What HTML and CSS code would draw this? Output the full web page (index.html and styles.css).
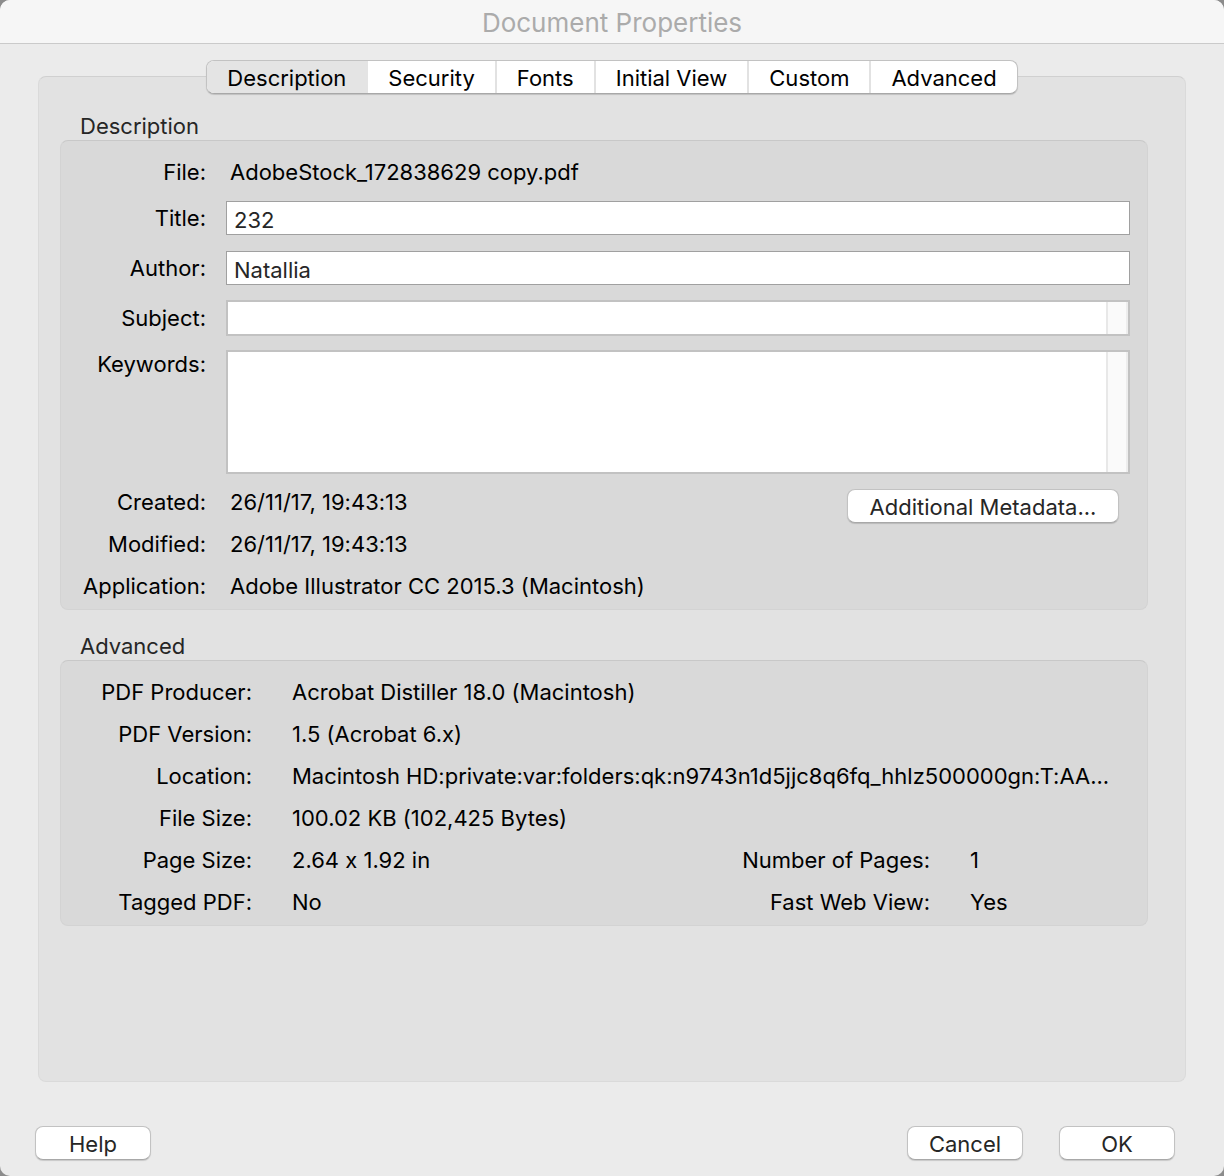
FILE: index.html
```html
<!DOCTYPE html>
<html lang="en">
<head>
  <meta charset="UTF-8">
  <title>Document Properties</title>
  <meta name="viewport" content="width=device-width, initial-scale=1.0">
  <link rel="stylesheet" href="styles.css">
</head>
<body>

  <div class="window">
    <header class="titlebar">
      <h1>Document Properties</h1>
    </header>

    <main class="panel">
      <div class="tabs" role="tablist">
        <button type="button" role="tab" class="tab active" aria-selected="true">Description</button>
        <button type="button" role="tab" class="tab">Security</button>
        <button type="button" role="tab" class="tab">Fonts</button>
        <button type="button" role="tab" class="tab">Initial View</button>
        <button type="button" role="tab" class="tab">Custom</button>
        <button type="button" role="tab" class="tab">Advanced</button>
      </div>

      <h2>Description</h2>
      <form class="group description">
        <span class="name">File:</span>
        <span class="value wide">AdobeStock_172838629 copy.pdf</span>

        <label class="name middle" for="title">Title:</label>
        <input class="wide" type="text" id="title" value="232">

        <label class="name middle" for="author">Author:</label>
        <input class="wide" type="text" id="author" value="Natallia">

        <label class="name middle" for="subject">Subject:</label>
        <div class="scroll-box wide">
          <textarea id="subject" rows="1"></textarea>
          <span class="track"></span>
        </div>

        <label class="name" for="keywords">Keywords:</label>
        <div class="scroll-box tall wide">
          <textarea id="keywords"></textarea>
          <span class="track"></span>
        </div>

        <span class="name">Created:</span>
        <span class="value">26/11/17, 19:43:13</span>
        <button type="button" class="btn metadata">Additional Metadata...</button>

        <span class="name">Modified:</span>
        <span class="value">26/11/17, 19:43:13</span>

        <span class="name">Application:</span>
        <span class="value wide">Adobe Illustrator CC 2015.3 (Macintosh)</span>
      </form>

      <h2>Advanced</h2>
      <dl class="group advanced">
        <dt>PDF Producer:</dt>
        <dd class="wide">Acrobat Distiller 18.0 (Macintosh)</dd>
        <dt>PDF Version:</dt>
        <dd class="wide">1.5 (Acrobat 6.x)</dd>
        <dt>Location:</dt>
        <dd class="wide">Macintosh HD:private:var:folders:qk:n9743n1d5jjc8q6fq_hhlz500000gn:T:AA...</dd>
        <dt>File Size:</dt>
        <dd class="wide">100.02 KB (102,425 Bytes)</dd>
        <dt>Page Size:</dt>
        <dd>2.64 x 1.92 in</dd>
        <dt>Number of Pages:</dt>
        <dd>1</dd>
        <dt>Tagged PDF:</dt>
        <dd>No</dd>
        <dt>Fast Web View:</dt>
        <dd>Yes</dd>
      </dl>
    </main>

    <footer class="actions">
      <button type="button" class="btn help">Help</button>
      <button type="button" class="btn">Cancel</button>
      <button type="button" class="btn">OK</button>
    </footer>
  </div>

</body>
</html>
```
FILE: styles.css
```css
* {
  box-sizing: border-box;
}
body {
  margin: 0;
  background: #8c8c8c;
  color: #000;
  font-family: Inter, "Liberation Sans", sans-serif;
  font-size: 22px;
  line-height: 26px;
  font-variant-ligatures: no-contextual;
}
button, input, textarea {
  font: inherit;
}
.window {
  display: flex;
  flex-direction: column;
  min-height: 100vh;
  background: #ebebeb;
  border-radius: 10px;
  overflow: hidden;
}
.titlebar {
  height: 44px;
  padding-top: 10px;
  background: #f6f6f6;
  border-bottom: 1px solid #cacaca;
  text-align: center;
}
h1 {
  margin: 0;
  color: #ababab;
  font-size: 26px;
  font-weight: 400;
  line-height: 26px;
}
.panel {
  flex: 1;
  margin: 32px 38px 0;
  background: #e2e2e2;
  border: 1px solid #dadada;
  border-top-color: #d0d0d0;
  border-radius: 8px;
}

/* tabs straddle the top edge of the panel */
.tabs {
  display: flex;
  width: fit-content;
  margin: -17px auto 19px;
  background: #fff;
  border: 1px solid #c2c2c2;
  border-bottom-color: #a8a8a8;
  border-radius: 8px;
  box-shadow: 0 1px 1px rgba(0, 0, 0, 0.15);
  overflow: hidden;
}
.tab {
  height: 32px;
  padding: 2px 20px 0;
  background: none;
  border: none;
  border-left: 2px solid #e2e2e2;
  color: #000;
  white-space: nowrap;
}
.tab.active {
  background: #e4e4e4;
}
.tab:first-child {
  border-left: none;
}
.tab.active + .tab {
  border-left-color: #e4e4e4;
}

h2 {
  margin: 0 41px 1px;
  color: #262626;
  font-size: 22px;
  font-weight: 400;
}
.group {
  display: grid;
  row-gap: 16px;
  margin: 0 37px 23px 21px;
  padding: 18px 17px 10px;
  background: #d9d9d9;
  border: 1px solid #d3d3d3;
  border-top-color: #c8c8c8;
  border-radius: 8px;
}
.description {
  grid-template-columns: 128px 1fr auto;
  column-gap: 20px;
}
.name, dt {
  text-align: right;
  white-space: nowrap;
}
.middle {
  align-self: center;
}
.value {
  padding-left: 4px;
}
.description .wide {
  grid-column: 2 / -1;
}
input {
  width: 100%;
  height: 34px;
  padding: 3px 7px 0;
  background: #fff;
  border: 1px solid #a0a0a0;
  color: #262626;
}
.scroll-box {
  display: flex;
  height: 36px;
  margin: -1px 0;
  background: #fff;
  border: 2px solid #c2c2c2;
}
.scroll-box.tall {
  height: 124px;
}
textarea {
  flex: 1;
  padding: 3px 6px;
  background: none;
  border: none;
  resize: none;
  overflow: hidden;
}
.track {
  width: 22px;
  background: #fafafa;
  border-left: 2px solid #e8e8e8;
  border-right: 2px solid #ededed;
}
.btn {
  width: 116px;
  height: 34px;
  padding: 2px 0 0;
  background: #fff;
  border: 1px solid #c2c2c2;
  border-bottom-color: #a8a8a8;
  border-radius: 8px;
  box-shadow: 0 1px 1px rgba(0, 0, 0, 0.15);
  color: #262626;
}
.btn.metadata {
  grid-row: span 2;
  width: 272px;
  margin-right: 11px;
}

.advanced {
  grid-template-columns: 174px 1fr auto 160px;
  column-gap: 40px;
}
dd {
  margin: 0;
  white-space: nowrap;
}
.advanced .wide {
  grid-column: 2 / -1;
}

.actions {
  display: flex;
  gap: 36px;
  padding: 44px 49px 16px 35px;
}
.help {
  margin-right: auto;
}
```
